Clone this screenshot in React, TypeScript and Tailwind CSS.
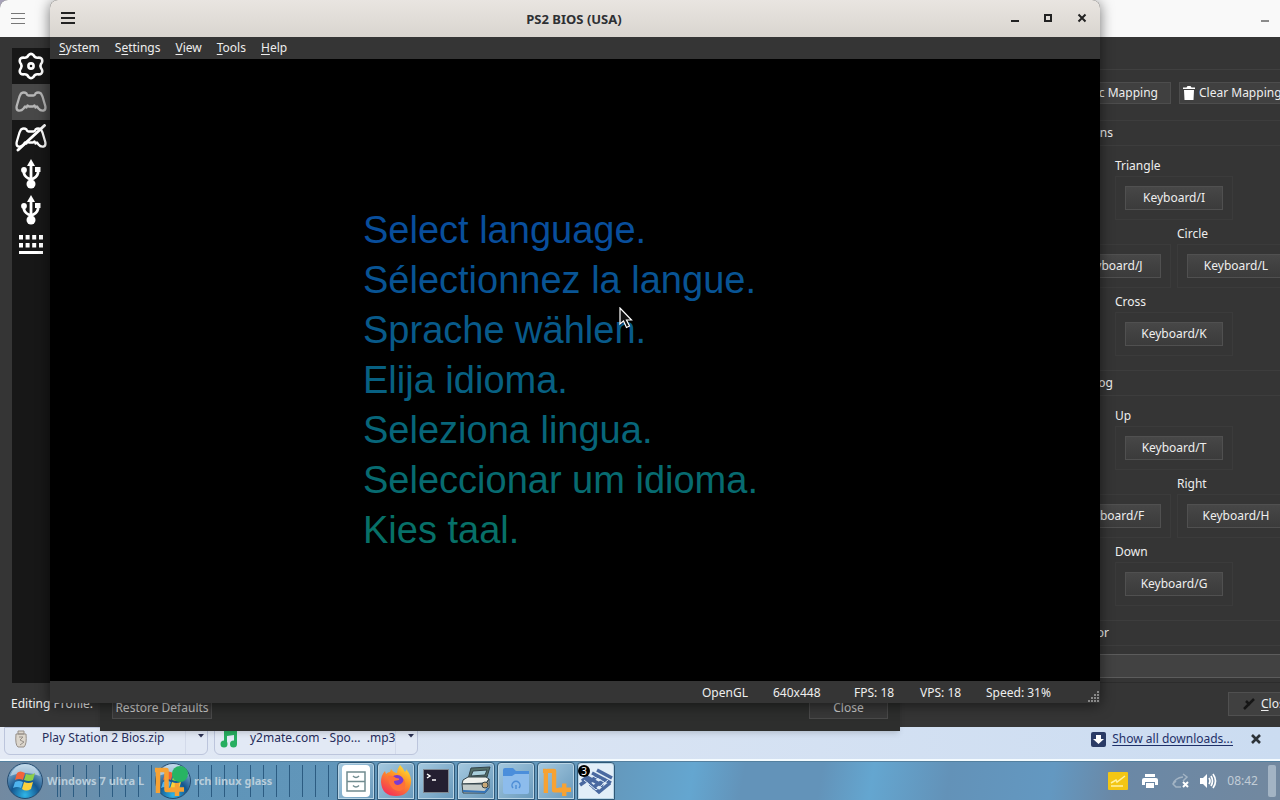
import type { ReactNode } from "react";

const font = "font-['Noto_Sans',sans-serif]";

function GearIcon() {
  return (
    <svg viewBox="0 0 28 28" className="size-7" fill="none" stroke="#fff" strokeWidth="2.6" strokeLinejoin="round">
      <path d="M11.5 3.2Q14 .5 16.5 3.2Q18 6 20.8 5.7Q25.3 5.3 25.3 9Q25.2 10.6 24 12Q22.8 14 24 16Q25.2 17.6 25.3 19Q25.3 22.7 20.8 22.3Q18 22 16.5 24.8Q14 27.5 11.5 24.8Q10 22 7.2 22.3Q2.7 22.7 2.7 19Q2.8 17.6 4 16Q5.2 14 4 12Q2.8 10.6 2.7 9Q2.7 5.3 7.2 5.7Q10 6 11.5 3.2Z" />
      <circle cx="14" cy="14" r="2.6" />
    </svg>
  );
}

function PadIcon({ off, color }: { off?: boolean; color: string }) {
  return (
    <svg viewBox="0 0 32 28" className="h-7 w-8" fill="none" stroke={color} strokeWidth="2.3" strokeLinejoin="round" strokeLinecap="round">
      <path d="M6 5.5Q9 3.5 11.5 5.5Q12 7.5 13.5 7.5H18.500Q20 7.500 20.500 5.500Q23 3.500 26 5.500L27.500 8.500L30.300 18Q31 22 28.500 22.500Q25.500 23 23.500 20.500L22 18.500L20.500 19.500L19.500 17.500L18 18.500H14L12.500 17.500L11.500 19.500L10 18.500L8.500 20.500Q6.500 23 3.500 22.500Q1 22 1.700 18L4.500 8.500Z" />
      {off && <path d="M3 26L29.500 1.500" strokeWidth="2.9" />}
    </svg>
  );
}

function UsbIcon() {
  return (
    <svg viewBox="0 0 24 30" className="h-[30px] w-6" fill="none" stroke="#fff" strokeWidth="2.8">
      <path d="M12 25V5M5 12V14.500Q6 18.500 12 20.500M19 11V14Q18 18.500 12 20.500" />
      <path d="M12 0L16 7H8Z" fill="#fff" stroke="none" />
      <circle cx="12" cy="25" r="4.500" fill="#fff" stroke="none" />
      <circle cx="5" cy="11" r="2.900" fill="#fff" stroke="none" />
      <path d="M16 8H21.500V13H16Z" fill="#fff" stroke="none" />
    </svg>
  );
}

function KeyboardIcon() {
  return (
    <svg viewBox="0 0 24 20" className="mb-0.5 h-5 w-6" fill="#fff">
      {[0, 6.6, 13.2, 20].map((x) => (
        <g key={x}>
          <rect x={x} y="0" width="4" height="4.500" />
          <rect x={x} y="8" width="4" height="4.500" />
        </g>
      ))}
      <rect x="0" y="16" width="24" height="3" />
    </svg>
  );
}

function Binding({ children }: { children: ReactNode }) {
  return (
    <div className="flex h-11 w-[118px] items-center justify-center border border-[#3b3b3b]">
      <button className="h-6 w-[98px] border border-[#505050] bg-linear-to-b from-[#474747] to-[#3b3b3b] text-[#eee]">{children}</button>
    </div>
  );
}

function Label({ children }: { children?: ReactNode }) {
  return <div className="flex h-6 w-[118px] items-center pt-1">{children}</div>;
}

function Header({ children }: { children: ReactNode }) {
  return (
    <div className="h-[26px] border-y border-[#3d3d3d]">
      <div className="flex h-full w-[60px] items-center justify-end whitespace-nowrap">{children}</div>
    </div>
  );
}

function Pad({ title, names, keys }: { title: string; names: string[]; keys: string[] }) {
  return (
    <section className="mb-[14px]">
      <Header>{title}</Header>
      <div className="flex flex-col items-center pt-1.5">
        <Label>{names[0]}</Label>
        <Binding>{keys[0]}</Binding>
        <div className="flex gap-1.5">
          {[1, 2].map((i) => (
            <div key={i}>
              <Label>{names[i]}</Label>
              <Binding>{keys[i]}</Binding>
            </div>
          ))}
        </div>
        <Label>{names[3]}</Label>
        <Binding>{keys[3]}</Binding>
      </div>
    </section>
  );
}

function SettingsWindow() {
  const item = "flex h-9 w-[38px] items-center justify-center";
  return (
    <section className="absolute inset-x-0 top-0 bottom-[73px] flex flex-col overflow-hidden rounded-tl-lg bg-[#353535] text-[#eee]">
      <header className="flex h-[37px] shrink-0 items-center justify-between bg-[#f9f9f9] px-[11px]">
        <button aria-label="Window menu" className="flex w-[14px] flex-col gap-1">
          <span className="h-px bg-[#777]" />
          <span className="h-px bg-[#777]" />
          <span className="h-px bg-[#777]" />
        </button>
        <button aria-label="Minimize" className="mt-1 h-0.5 w-2 bg-[#8a8a8a]" />
      </header>
      <div className="flex min-h-0 flex-1 pt-[11px] pl-3">
        <nav className="w-12 bg-[#171717]">
          <button aria-label="Global settings" className={item}><GearIcon /></button>
          <button aria-label="Controller port 1" className={item + " bg-[#484848]"}><PadIcon color="#b5b5b5" /></button>
          <button aria-label="Controller port 2" className={item}><PadIcon color="#fff" off /></button>
          <button aria-label="USB port 1" className={item}><UsbIcon /></button>
          <button aria-label="USB port 2" className={item}><UsbIcon /></button>
          <button aria-label="Hotkeys" className={item}><KeyboardIcon /></button>
        </nav>
        <div className="flex-1" />
        <div className="w-[227px] shrink-0 border-b border-[#2c2c2c]">
          <div className="w-[260px] pt-[21px]">
            <div className="border-t border-[#404040] pt-3">
              <div className="mb-4 flex gap-2">
                <button className="flex h-[22px] w-[118px] items-center justify-end border border-[#4d4d4d] bg-[#404040] pr-3 whitespace-nowrap">Automatic Mapping</button>
                <button className="flex h-[22px] w-[118px] items-center gap-1 border border-[#4d4d4d] bg-[#404040] pl-[3px] whitespace-nowrap">
                  <svg viewBox="0 0 12 14" className="h-[14px] w-3 shrink-0" fill="#fff"><path d="M0 1.500H3.500L4.500 0H7.500L8.500 1.500H12V3H0ZM1 4H11L10.500 14H1.500Z" /></svg>
                  Clear Mapping
                </button>
              </div>
              <div className="w-[242px]">
                <Pad title="Face Buttons" names={["Triangle", "", "Circle", "Cross"]} keys={["Keyboard/I", "Keyboard/J", "Keyboard/L", "Keyboard/K"]} />
                <Pad title="Right Analog" names={["Up", "", "Right", "Down"]} keys={["Keyboard/T", "Keyboard/F", "Keyboard/H", "Keyboard/G"]} />
                <Header><span className="pr-1">Large Motor</span></Header>
                <button aria-label="Motor binding" className="mt-2 h-6 w-full border-y border-[#5c5c5c] bg-[#424242]" />
              </div>
            </div>
          </div>
        </div>
      </div>
      <footer className="flex h-11 shrink-0 items-center justify-between pl-[11px]">
        <span className="pb-0.5">Editing Profile:</span>
        <div className="w-[52px]">
          <button className="mb-0.5 flex h-6 w-[80px] items-center gap-1.5 border border-[#505050] bg-[#404040] pl-3.5">
            <svg viewBox="0 0 12 12" className="size-3 shrink-0" stroke="#161616" strokeWidth="2.5"><path d="M1 11L11 1M3 3L7 7" /></svg>
            <span><u className="underline-offset-2">C</u>lose</span>
          </button>
        </div>
      </footer>
    </section>
  );
}

function Dialog() {
  const button = "h-6 border border-[#4a4a4a] bg-[#383838] pt-0.5 text-[#c9c9c9]";
  return (
    <section className="absolute right-[380px] bottom-[69px] left-[100px] flex h-20 items-end justify-between bg-[#2d2e2d] px-3 pb-3 shadow-md">
      <button className={button + " w-[100px]"}>Restore Defaults</button>
      <button className={button + " w-[79px]"}>Close</button>
    </section>
  );
}

function EmulatorWindow() {
  const lines = [
    { text: "Select language.", color: "text-[#084e9c]" },
    { text: "Sélectionnez la langue.", color: "text-[#085494]" },
    { text: "Sprache wählen.", color: "text-[#085a8a]" },
    { text: "Elija idioma.", color: "text-[#076082]" },
    { text: "Seleziona lingua.", color: "text-[#07667a]" },
    { text: "Seleccionar um idioma.", color: "text-[#076b70]" },
    { text: "Kies taal.", color: "text-[#077068]" },
  ];
  const menu = [["", "S", "ystem"], ["S", "e", "ttings"], ["", "V", "iew"], ["", "T", "ools"], ["", "H", "elp"]];
  return (
    <section className="absolute top-0 right-[180px] bottom-[97px] left-[50px] flex flex-col rounded-t-lg bg-[#353535] text-[#eee] shadow-[0_2px_14px_rgba(0,0,0,0.55)]">
      <header className="flex h-[37px] shrink-0 items-center rounded-t-lg bg-linear-to-b from-[#e9e5e1] to-[#d9d5cf] px-[11px] text-[#2e3033]">
        <button aria-label="Window menu" className="mb-0.5 flex w-[14px] flex-col gap-[3px]">
          <span className="h-0.5 bg-[#222]" />
          <span className="h-0.5 bg-[#222]" />
          <span className="h-0.5 bg-[#222]" />
        </button>
        <h1 className="flex-1 pl-[62px] text-center text-[13px] font-bold">PS2 BIOS (USA)</h1>
        <div className="flex items-center gap-[25px] pr-0.5 pb-0.5">
          <button aria-label="Minimize" className="mt-1.5 h-0.5 w-2 bg-[#222]" />
          <button aria-label="Maximize" className="size-2 border-2 border-[#222]" />
          <button aria-label="Close window"><svg viewBox="0 0 10 10" className="size-[10px]" stroke="#222" strokeWidth="2"><path d="M1.500 1.500L8.500 8.500M8.500 1.500L1.500 8.500" /></svg></button>
        </div>
      </header>
      <nav className="flex h-[22px] shrink-0 items-center gap-[15px] pl-[9px]">
        {menu.map(([a, b, c]) => (
          <button key={c}>{a}<u className="underline-offset-2">{b}</u>{c}</button>
        ))}
      </nav>
      <main className="min-h-0 flex-1 bg-black pt-[146px] pl-[313px] font-['Liberation_Sans',sans-serif] text-[38px] leading-[50px] whitespace-nowrap">
        {lines.map((l) => <p key={l.text} className={l.color}>{l.text}</p>)}
      </main>
      <footer className="flex h-[22px] shrink-0 items-center justify-end pt-0.5">
        <span className="w-[71px]">OpenGL</span>
        <span className="w-[81px]">640x448</span>
        <span className="w-[66px]">FPS: 18</span>
        <span className="w-[66px]">VPS: 18</span>
        <span className="w-[102px]">Speed: 31%</span>
        <svg viewBox="0 0 12 12" className="h-3 w-3 self-end" fill="#888">
          <path d="M9 0h2v2H9zM9 3h2v2H9zM9 6h2v2H9zM9 9h2v2H9zM6 3h2v2H6zM6 6h2v2H6zM6 9h2v2H6zM3 6h2v2H3zM3 9h2v2H3zM0 9h2v2H0z" />
        </svg>
      </footer>
    </section>
  );
}

function Downloads() {
  const item = "flex h-7 w-[204px] items-center rounded-b-md border border-[#bcc5dc] bg-[#e2e9f5]";
  const arrow = (
    <button aria-label="Download options" className="flex h-full items-start border-l border-[#d3daea] pt-1.5 pr-[3px] pl-3">
      <svg viewBox="0 0 6 4" className="h-1 w-1.5" fill="#2b3152"><path d="M0 0H6L3 3.500Z" /></svg>
    </button>
  );
  return (
    <div className="flex h-[34px] shrink-0 items-start gap-[6px] border-b-2 border-[#f4fbff] bg-linear-to-r from-[#e4eaf5] to-[#cbdcf1] pl-1 text-[#272e5c]">
      <div className={item}>
        <svg viewBox="0 0 14 18" className="mb-1 ml-[9px] h-[18px] w-[14px] shrink-0" fill="none" stroke="#968f88">
          <path d="M2 4Q1 15 4 17H10Q13 14 12 4ZM4 1H10V4H4Z" fill="#dcd6cc" />
          <path d="M5 7H9L6 10L10 12L6 15" />
        </svg>
        <span className="ml-[14px] flex-1 pb-1.5">Play Station 2 Bios.zip</span>
        {arrow}
      </div>
      <div className={item}>
        <svg viewBox="0 0 18 18" className="mb-1 ml-[5px] size-[18px] shrink-0" fill="#27ae60">
          <path d="M4 1L17 1V14H14V5L7 6V15H4Z" /><circle cx="4" cy="14" r="3.500" /><circle cx="13.500" cy="14" r="3.500" />
        </svg>
        <span className="ml-3 flex-1 pb-1.5 whitespace-pre">y2mate.com - Spo...  .mp3</span>
        {arrow}
      </div>
      <div className="ml-auto flex h-6 items-center pr-[19px]">
        <svg viewBox="0 0 15 15" className="mr-[6px] size-[15px]"><rect width="15" height="15" rx="2" fill="#2a3b66" /><path d="M5 3H10V7H13L7.500 12L2 7H5Z" fill="#fff" /></svg>
        <a href="#downloads" className="text-[#1f3068] underline underline-offset-2">Show all downloads...</a>
        <button aria-label="Close downloads" className="ml-[18px]"><svg viewBox="0 0 10 10" className="size-[10px]" stroke="#2c3238" strokeWidth="2.600"><path d="M1 1L9 9M9 1L1 9" /></svg></button>
      </div>
    </div>
  );
}

function StartOrb() {
  return (
    <svg viewBox="0 0 38 38" className="size-[38px] shrink-0">
      <defs>
        <radialGradient id="orb" cx=".5" cy=".9" r=".9"><stop offset="0" stopColor="#2fb6e8" /><stop offset=".45" stopColor="#14568f" /><stop offset="1" stopColor="#9fc2dc" /></radialGradient>
      </defs>
      <circle cx="19" cy="19" r="17.500" fill="url(#orb)" stroke="#244b70" />
      <path d="M4 14Q9 2 19 2Q30 2 34 14Q19 8 4 14Z" fill="#e4f0f8" opacity=".55" />
      <path d="M11 11Q14 8 19 11L17 18Q13 16 9 18Z" fill="#f2643b" />
      <path d="M20 12Q25 14 29 11L27 18Q23 20 18 18Z" fill="#8ccf4b" />
      <path d="M9 20Q13 18 17 20L15 26Q11 24 7 26Z" fill="#4fb4ee" />
      <path d="M18 20Q22 22 27 20L25 27Q20 30 16 27Z" fill="#fbd13c" />
    </svg>
  );
}

function NPlus({ className }: { className: string }) {
  return (
    <svg viewBox="0 0 30 30" className={className} fill="none" stroke="#f7a233" strokeWidth="4.500" strokeLinejoin="round">
      <path d="M1 4H4V27M5 4H12.500V24H24M23 17V30M17 23.500H30" />
    </svg>
  );
}

const taskIcons: { name: string; icon: ReactNode }[] = [
  { name: "Files", icon: <svg viewBox="0 0 30 34" className="h-[34px] w-[30px]" fill="none" stroke="#718c90" strokeWidth="1.500"><rect x="1" y="1" width="28" height="32" rx="4" fill="#fff" stroke="none" /><path d="M6 8H24V27H6ZM6 17.500H24M12 12Q15 15 18 12M12 21.500Q15 24.500 18 21.500" /></svg> },
  { name: "Firefox", icon: (
    <svg viewBox="0 0 32 32" className="size-8">
      <defs><linearGradient id="fox" x1=".8" y1="0" x2=".2" y2="1"><stop offset="0" stopColor="#ffe234" /><stop offset=".4" stopColor="#ff9226" /><stop offset="1" stopColor="#f4295b" /></linearGradient></defs>
      <path d="M20 0Q23 3 25 7Q27 5 26 4Q32 11 31 18Q29 31 16 31Q2 31 1 17Q1 10 5 6L6 9Q8 7 10 7L11 4Q14 8 17 8Q17 4 20 0Z" fill="url(#fox)" />
      <circle cx="17" cy="17" r="7" fill="#7a3bd0" />
      <path d="M8 11Q13 10 16 13Q20 13 19 15L14 16Q14 20 18 20Q23 19 24 14Q28 23 20 26Q9 26 8 11Z" fill="#ff7139" />
    </svg>
  ) },
  { name: "Terminal", icon: <svg viewBox="0 0 26 24" className="h-6 w-[26px]"><rect x=".5" y=".5" width="25" height="23" fill="#241f31" stroke="#7f8790" /><path d="M4 5L7 7L4 9M9 11H13" stroke="#fff" fill="none" strokeWidth="1.500" /></svg> },
  { name: "Scanner", icon: (
    <svg viewBox="0 0 32 30" className="h-[30px] w-8" stroke="#34444a">
      <path d="M11 2L30 1L27 11L8 13Z" fill="#536e68" /><path d="M13 5L27 4L25 9L11 10Z" fill="#a9cfdc" />
      <path d="M3 14L8 11H26L29 13L26 17L2 18Z" fill="#eef0ec" /><path d="M2 18H26L29 13V22L25 27H3Z" fill="#c3cbc9" />
      <path d="M3 25L25 26L28 22" fill="none" stroke="#3474b8" strokeWidth="2" /><circle cx="25" cy="19" r="3" fill="#c9a877" />
    </svg>
  ) },
  { name: "Home folder", icon: <svg viewBox="0 0 28 28" className="size-7"><path d="M1 3Q1 1 3 1H11L14 4H27V10H1Z" fill="#4b8edb" /><path d="M1 9H10L13 7H27V25Q27 27 25 27H3Q1 27 1 25Z" fill="#8dbcec" /><path d="M11 21A4 4 0 1 1 17 21M14 18V22" fill="none" stroke="#4e8ed6" strokeWidth="1.500" /></svg> },
  { name: "N plus", icon: <NPlus className="size-[29px]" /> },
  { name: "PCSX2", icon: (
    <svg viewBox="0 0 34 34" className="size-[34px]" fill="none" stroke="#4a69a0" strokeWidth="3.500">
      <path d="M3 17L9 12.500M1 21L11 14M9 19L18 12.500M8 13L24 22M13 9L32 19M18 6L33 14M13 24L27 15M11 20L20 28L31 19" />
      <path d="M5 16L17 26L29 16M10 10L25 18" stroke="#dce9f7" strokeWidth="1" />
    </svg>
  ) },
];

const stripes = "h-8 bg-[repeating-linear-gradient(90deg,#2c5c82_0px,#2c5c82_1px,transparent_1px,transparent_13px)]";

function Taskbar() {
  return (
    <footer className="relative flex h-[39px] shrink-0 items-center border-t border-[#54809f] bg-[linear-gradient(100deg,#7389a0_0%,#5f94b8_14%,#6499bd_48%,#64a6d0_54%,#6393b9_58%,#6393b9_64%,#64a6d0_68%,#6392b8_74%,#6398c1_82%,#6a88a6_87%,#72889f_100%)]">
      <div className="flex w-[337px] shrink-0 items-center text-[11px] leading-8 font-bold text-[#b8cddb]">
        <button aria-label="Start" className="ml-[6px]"><StartOrb /></button>
        <span className={stripes + " ml-[3px] w-[107px] bg-position-[13px_0px] whitespace-nowrap"}>Windows 7 ultra L</span>
        <button aria-label="Arch menu" className="relative"><StartOrb /><NPlus className="absolute top-1 left-0 size-[30px]" /><span className="absolute top-1 right-1 size-4 rounded-full bg-[#28b463]" /></button>
        <span className={stripes + " mr-[7px] flex-1 bg-position-[6px_0px] pl-0.5 whitespace-nowrap"}>rch linux glass</span>
      </div>
      <div className="flex h-full gap-0.5">
        {taskIcons.map((t, i) => (
          <button key={t.name} aria-label={t.name} className={"relative flex h-full w-[38px] items-center justify-center rounded-t-sm border border-[#2f5877] shadow-[inset_0_0_0_1px_#b8d4e5] " + (i === 6 ? "bg-[#e2eef8]" : "bg-linear-to-br from-[#a5c9df] to-[#6899bb]")}>
            {t.icon}
            {i === 6 && <span className="absolute top-0.5 left-0 flex size-3 items-center justify-center rounded-full bg-black text-[10px] leading-3 text-white">3</span>}
          </button>
        ))}
      </div>
      <div className="ml-auto flex h-full items-center text-white">
        <svg viewBox="0 0 20 18" className="mr-[13px] h-[18px] w-5"><rect width="20" height="18" rx="1" fill="#f3c614" /><path d="M3 11L8 8L9 10L17 4M3 14H15" stroke="#fff2a3" fill="none" strokeWidth="1.500" /></svg>
        <svg viewBox="0 0 18 16" className="mr-[13px] h-4 w-[18px]" fill="#fff"><path d="M4 1H14V4H4ZM3 5H15Q17 5 17 7V12H14V9H4V12H1V7Q1 5 3 5ZM5 10H13V15H5Z" /></svg>
        <svg viewBox="0 0 18 16" className="mr-[9px] h-4 w-[18px]" fill="none" stroke="#a3b4c4" strokeWidth="1.500"><path d="M1 11Q3 5 11 4M11 1L15 4L11 8M4 8L1 11L4 14H9" /><path d="M11 9L16 14M16 9L11 14" stroke="#fff" strokeWidth="2" /></svg>
        <svg viewBox="0 0 18 16" className="mr-[10px] h-4 w-[18px]" fill="none" stroke="#fff" strokeWidth="1.700"><path d="M1 5H4L8 1V15L4 11H1Z" fill="#fff" stroke="none" /><path d="M10 5Q12 8 10 11M12 3Q15 8 12 13M14 1Q19 8 14 15" /></svg>
        <time className="mr-[10px] text-[#c1ccd6]">08:42</time>
        <div className="mr-1 h-8 w-2 rounded-xs bg-[#a3b4c4]" />
      </div>
    </footer>
  );
}

export default function App() {
  return (
    <div className={"relative flex h-screen flex-col overflow-hidden bg-[#a7a2b8] text-[12px] leading-4 " + font}>
      <div className="flex-1" />
      <Downloads />
      <Taskbar />
      <SettingsWindow />
      <Dialog />
      <EmulatorWindow />
      <svg viewBox="0 0 14 22" className="pointer-events-none absolute top-[307px] left-[619px] h-[22px] w-[14px]" fill="#111" stroke="#fff" strokeWidth="1.200">
        <path d="M1 1V17L4.500 14L7.500 20.500L10.500 19L7.500 13H12.500Z" />
      </svg>
    </div>
  );
}
